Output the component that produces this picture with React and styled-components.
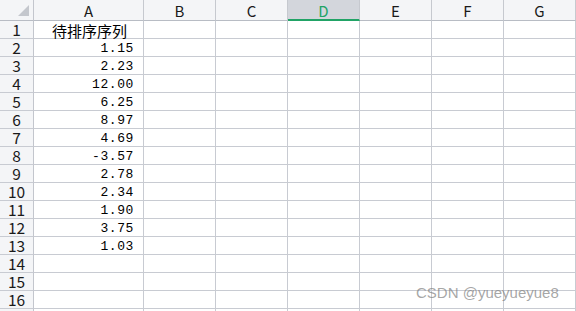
import React from "react";
import styled, { createGlobalStyle, css } from "styled-components";

const Global = createGlobalStyle`
  html, body { margin: 0; padding: 0; background: #fff; overflow: hidden; }
  * { box-sizing: border-box; }
`;

const Sheet = styled.div`
  position: relative;
  width: 576px;
  height: 311px;
  overflow: hidden;
  display: grid;
  grid-template-columns: 34px 110px repeat(6, 72px);
  grid-template-rows: 21px repeat(17, 18px);
  font-family: "Noto Sans CJK SC", "Noto Sans", sans-serif;
`;

const Corner = styled.div`
  position: relative;
  background: #f4f5f7;
  border-right: 1px solid #c3c6cd;
  border-bottom: 1px solid #b8bcc4;
  &::after {
    content: "";
    position: absolute;
    right: 4px;
    bottom: 4px;
    width: 0;
    height: 0;
    border-left: 11px solid transparent;
    border-bottom: 11px solid #c4c7cd;
  }
`;

const ColHead = styled.div`
  background: ${(p) => (p.$active ? "#d3d6dc" : "#f4f5f7")};
  border-right: 1px solid #c6c9cf;
  border-bottom: ${(p) => (p.$active ? "2px solid #21a366" : "1px solid #b8bcc4")};
  color: ${(p) => (p.$active ? "#21a366" : "#1a1a1a")};
  font-size: 15px;
  line-height: 1;
  display: flex;
  align-items: center;
  justify-content: center;
  padding-top: ${(p) => (p.$active ? "1px" : "0")};
`;

const RowHead = styled.div`
  background: #f4f5f7;
  border-right: 1px solid #c3c6cd;
  border-bottom: 1px solid #c8cbd2;
  color: #1a1a1a;
  font-size: 15.5px;
  line-height: 1;
  display: flex;
  align-items: center;
  justify-content: center;
  padding-top: 1px;
`;

const Cell = styled.div`
  border-right: 1px solid #c8cbd2;
  border-bottom: 1px solid #c8cbd2;
  display: flex;
  align-items: center;
  color: #000;
  white-space: nowrap;
  line-height: 1;
  ${(p) =>
    p.$kind === "num" &&
    css`
      justify-content: flex-end;
      padding-right: 9px;
      padding-top: 2px;
      font-family: "Liberation Mono", "DejaVu Sans Mono", monospace;
      font-size: 13px;
      letter-spacing: 0.6px;
    `}
  ${(p) =>
    p.$kind === "text" &&
    css`
      justify-content: flex-start;
      padding-left: 18px;
      padding-top: 1px;
      font-size: 15px;
      font-family: "Noto Sans CJK SC", sans-serif;
    `}
`;

const Watermark = styled.div`
  position: absolute;
  left: 416px;
  top: 284px;
  font-family: "Liberation Sans", Arial, sans-serif;
  font-size: 15px;
  color: rgba(128, 128, 128, 0.7);
  white-space: nowrap;
  pointer-events: none;
`;

const cols = ["A", "B", "C", "D", "E", "F", "G"];
const values = ["1.15", "2.23", "12.00", "6.25", "8.97", "4.69", "-3.57", "2.78", "2.34", "1.90", "3.75", "1.03"];

export default function App() {
  const rows = [];
  for (let r = 1; r <= 17; r++) {
    rows.push(<RowHead key={`h${r}`}>{r}</RowHead>);
    cols.forEach((c, i) => {
      let content = null;
      let kind;
      if (i === 0 && r === 1) {
        content = "待排序序列";
        kind = "text";
      } else if (i === 0 && r >= 2 && r <= 13) {
        content = values[r - 2];
        kind = "num";
      }
      rows.push(
        <Cell key={`${c}${r}`} $kind={kind}>
          {content}
        </Cell>
      );
    });
  }
  return (
    <>
      <Global />
      <Sheet>
        <Corner />
        {cols.map((c) => (
          <ColHead key={c} $active={c === "D"}>
            {c}
          </ColHead>
        ))}
        {rows}
        <Watermark>CSDN @yueyueyue8</Watermark>
      </Sheet>
    </>
  );
}
